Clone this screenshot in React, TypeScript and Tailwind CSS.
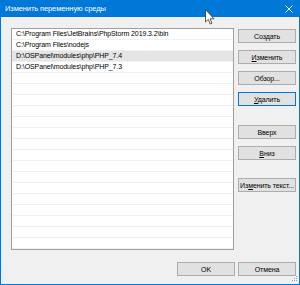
import React from "react";

const rows = [
  "C:\\Program Files\\JetBrains\\PhpStorm 2019.3.2\\bin",
  "C:\\Program Files\\nodejs",
  "D:\\OSPanel\\modules\\php\\PHP_7.4",
  "D:\\OSPanel\\modules\\php\\PHP_7.3",
];

function Btn({ children, className = "", focused = false }: { children: React.ReactNode; className?: string; focused?: boolean }) {
  return (
    <div
      className={`w-[58px] h-[14px] flex items-center justify-center bg-[#e1e1e1] border text-[7px] tracking-[-0.1px] leading-none text-black whitespace-nowrap ${
        focused ? "border-[#0078d7]" : "border-[#adadad]"
      } ${className}`}
    >
      {children}
    </div>
  );
}

export default function App() {
  const all = Array.from({ length: 20 }, (_, i) => rows[i] ?? "");
  return (
    <div
      className="relative w-[300px] h-[285px] bg-[#0078d7] px-[1px] pb-[1px] flex flex-col"
      style={{ fontFamily: '"Liberation Sans", Arial, sans-serif' }}
    >
      <div className="h-[17px] flex items-center justify-between pl-[4px] pr-[5px] text-white text-[7.5px] tracking-[-0.1px]">
        <span>Изменить переменную среды</span>
        <svg width="8" height="8" viewBox="0 0 8 8" className="mr-[1px]">
          <path d="M0.5 0.5 L7.5 7.5 M7.5 0.5 L0.5 7.5" stroke="white" strokeWidth="0.9" />
        </svg>
      </div>
      <div className="flex-1 bg-[#f0f0f0] flex flex-col pl-[10px] pr-[3px] pt-[11px]">
        <div className="flex gap-[4px]">
          <div className="w-[223px] h-[222px] bg-white border border-[#a0a0a0] flex flex-col overflow-hidden">
            {all.map((t, i) => (
              <div
                key={i}
                className={`h-[11px] shrink-0 border-b border-[#f0f0f0] pl-[4px] text-[7px] tracking-[-0.1px] leading-[10px] text-black whitespace-nowrap ${
                  i === 2 ? "bg-[#e5e5e5]" : ""
                }`}
              >
                {t}
              </div>
            ))}
          </div>
          <div className="flex flex-col pt-[1px]">
            <Btn>Создать</Btn>
            <Btn className="mt-[7px]"><span><span className="underline">И</span>зменить</span></Btn>
            <Btn className="mt-[7px]">Обзор...</Btn>
            <Btn className="mt-[7px]" focused><span><span className="underline">У</span>далить</span></Btn>
            <Btn className="mt-[19px]">Вверх</Btn>
            <Btn className="mt-[7px]"><span><span className="underline">В</span>низ</span></Btn>
            <Btn className="mt-[18px]"><span>Из<span className="underline">м</span>енить текст...</span></Btn>
          </div>
        </div>
        <div className="flex justify-end gap-[3px] mt-[12px]">
          <Btn>OK</Btn>
          <Btn>Отмена</Btn>
        </div>
      </div>
      <svg className="absolute left-[292px] top-[276px]" width="6" height="6" viewBox="0 0 6 6">
        <rect x="4" y="0" width="1" height="1" fill="#a0a0a0" />
        <rect x="2" y="2" width="1" height="1" fill="#a0a0a0" />
        <rect x="4" y="2" width="1" height="1" fill="#a0a0a0" />
        <rect x="0" y="4" width="1" height="1" fill="#a0a0a0" />
        <rect x="2" y="4" width="1" height="1" fill="#a0a0a0" />
        <rect x="4" y="4" width="1" height="1" fill="#a0a0a0" />
      </svg>
      <svg className="absolute left-[205px] top-[9px]" width="10" height="17" viewBox="0 0 10 17">
        <path d="M0.5 0.5 L0.5 13 L3.3 10.4 L5.2 15 L7 14.2 L5.1 9.8 L9 9.8 Z" fill="white" stroke="#333" strokeWidth="0.8" />
      </svg>
    </div>
  );
}
